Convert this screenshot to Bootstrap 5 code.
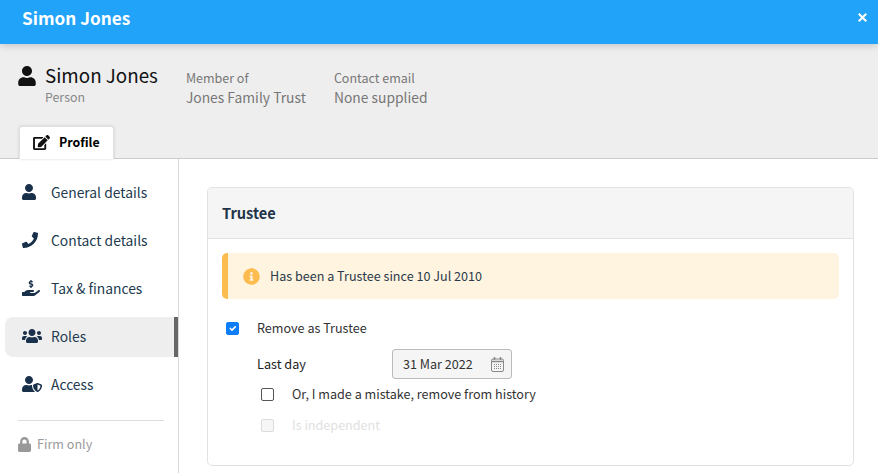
<!DOCTYPE html>
<html lang="en">
<head>
<meta charset="utf-8">
<title>Simon Jones</title>
<link href="https://cdn.jsdelivr.net/npm/bootstrap@5.3.0/dist/css/bootstrap.min.css" rel="stylesheet">
<style>
html,body{height:474px;overflow:hidden}
body{font-family:"Noto Sans CJK SC","Noto Sans",sans-serif;font-size:12.6px;line-height:20px;color:#212b36;background:#fff}
.top-bar{height:44px;background:#22a3fa;color:#fff;padding:0 11px 0 22px;position:relative;z-index:2;box-shadow:0 1px 8px rgba(0,0,0,.2)}
.top-title{font-size:17.2px;font-weight:700;line-height:35px}
.top-close{width:9px;height:9px;fill:#fff;display:block;margin-top:13px}
.band{height:115px;background:#eee;padding:20px 0 0 18px;border-bottom:1px solid #ccc;position:relative}
.band-ico{width:18px;height:20px;fill:#111;margin-top:2px}
.band-name{font-size:18.8px;line-height:24px;color:#111;margin-left:9px;margin-top:-1px;margin-bottom:1px}
.band-sub{font-size:12.4px;line-height:18px;color:#888;margin-left:27px}
.meta{margin-left:28px;margin-top:5px;color:#777}
.meta-k{font-size:12.5px;line-height:18px}
.meta-v{font-size:13.85px;line-height:20px}
.tab-wrap{position:absolute;left:19px;bottom:-1px;height:33px}
.tab-wrap .nav-link{height:33px;width:95px;padding:0 0 1px 13px;display:flex;align-items:center;gap:9px;background:#fff;color:#111;font-weight:700;font-size:12.4px;border:1px solid #ddd;border-bottom-color:#fff;border-radius:3px 3px 0 0;box-shadow:0 0 3px rgba(0,0,0,.15)}
.tab-ico{width:17px;height:15px;fill:#111}
.body-row{height:314px}
.side{width:179px;flex:none;border-right:1px solid #d9d9d9;padding:14px 0 0 5px}
.side-link{height:40px;margin-bottom:8px;padding:0 0 2px 16.5px;color:#223a50;font-size:13.85px;border-radius:8px 0 0 8px;text-decoration:none}
.side-link.is-on{background:#eee;border-right:4px solid #666}
.side-ico{height:16px;width:auto;fill:#18304a;display:block}
.side-ico-box{width:29.5px;flex:none}
.side-rule{margin:15px 14px 0 13px;border-color:#ddd;opacity:1}
.firm{margin:13px 0 0 13px;color:#999;font-size:12.6px;gap:6px}
.firm svg{width:13px;height:15px;fill:#999}
.main-pane{padding:28px 24px 0 28px;min-width:0}
.panel{height:279px;border:1px solid #e2e2e2;border-radius:5px}
.panel .card-header{height:51px;padding:0 14px;background:#f5f5f5;border-bottom:1px solid #e2e2e2;font-weight:700;font-size:14.6px;color:#1e3448;display:flex;align-items:center}
.panel .card-body{padding:14px 14px 0}
.note{height:46px;margin:0 0 19px;padding:0 0 0 15px;background:#fff4e0;border:0;border-left:6px solid #fcbc50;border-radius:5px;color:#2b3a49;font-size:12.6px;gap:10px}
.note svg{width:17px;height:17px;fill:#fcbc50}
.chk-row{height:20px;color:#333}
.chk-row .form-check-input{width:13px;height:13px;margin:0;border-color:#555;border-radius:2px;flex:none}
.chk-row .form-check-input:checked{background-color:#0d7dfa;border-color:#0d7dfa}
.chk-row .form-check-input:disabled{opacity:.5;background-color:#eee;border-color:#bbb}
.chk-row .form-check-label{opacity:1}
.ind-a{padding-left:4px;gap:18px}
.ind-b{padding-left:39px;gap:18px}
.gap-s{margin-top:5px}
.gap-m{margin-top:11px}
.muted-lbl{color:#c4c4c4}
.date-row{margin-top:11px;padding-left:35px;height:30px;color:#222}
.date-lbl{width:135px;font-size:12.7px}
.date-box{width:120px;height:30px;border:1px solid #bbb;border-radius:3px;background:#f5f5f5;padding:0 7px 0 10px;color:#333;font-size:12.6px}
.date-box svg{width:13px;height:15px;fill:none;stroke:#888}
</style>
</head>
<body>
<header class="top-bar d-flex justify-content-between align-items-start">
  <div class="top-title">Simon Jones</div>
  <svg class="top-close" viewBox="0 0 10 10"><path d="M1.6 0L5 3.4 8.4 0 10 1.6 6.6 5 10 8.4 8.4 10 5 6.6 1.6 10 0 8.4 3.4 5 0 1.6z"/></svg>
</header>
<section class="band">
  <div class="d-flex">
    <div>
      <div class="d-flex">
        <svg class="band-ico" viewBox="0 0 448 512"><path d="M224 256c70.7 0 128-57.3 128-128S294.7 0 224 0 96 57.3 96 128s57.3 128 128 128zm89.6 32h-16.7c-22.2 10.2-46.9 16-72.9 16s-50.6-5.8-72.9-16h-16.7C60.2 288 0 348.2 0 422.4V464c0 26.5 21.5 48 48 48h352c26.5 0 48-21.5 48-48v-41.6c0-74.2-60.2-134.4-134.4-134.4z"/></svg>
        <div class="band-name">Simon Jones</div>
      </div>
      <div class="band-sub">Person</div>
    </div>
    <div class="meta"><div class="meta-k">Member of</div><div class="meta-v">Jones Family Trust</div></div>
    <div class="meta"><div class="meta-k">Contact email</div><div class="meta-v">None supplied</div></div>
  </div>
  <ul class="nav nav-tabs border-0 tab-wrap">
    <li class="nav-item"><a class="nav-link active" href="#">
      <svg class="tab-ico" viewBox="0 0 576 512"><path d="M402.6 83.2l90.2 90.2c3.8 3.8 3.8 10 0 13.8L274.4 405.6l-92.8 10.3c-12.4 1.4-22.9-9.1-21.5-21.5l10.3-92.8L388.8 83.2c3.8-3.8 10-3.8 13.8 0zm162-22.9l-48.8-48.8c-15.2-15.2-39.9-15.2-55.2 0l-35.4 35.4c-3.8 3.8-3.8 10 0 13.8l90.2 90.2c3.8 3.8 10 3.8 13.8 0l35.4-35.4c15.2-15.3 15.2-40 0-55.2zM384 346.2V448H64V128h229.8c3.2 0 6.2-1.3 8.5-3.5l40-40c7.6-7.6 2.2-20.5-8.5-20.5H48C21.5 64 0 85.5 0 112v352c0 26.5 21.5 48 48 48h352c26.5 0 48-21.5 48-48V306.2c0-10.7-12.9-16-20.5-8.5l-40 40c-2.2 2.3-3.5 5.3-3.5 8.5z"/></svg>
      Profile</a></li>
  </ul>
</section>
<div class="d-flex body-row">
  <nav class="side">
    <a class="side-link d-flex align-items-center" href="#"><span class="side-ico-box"><svg class="side-ico" viewBox="0 0 448 512"><path d="M224 256c70.7 0 128-57.3 128-128S294.7 0 224 0 96 57.3 96 128s57.3 128 128 128zm89.6 32h-16.7c-22.2 10.2-46.9 16-72.9 16s-50.6-5.8-72.9-16h-16.7C60.2 288 0 348.2 0 422.4V464c0 26.5 21.5 48 48 48h352c26.5 0 48-21.5 48-48v-41.6c0-74.2-60.2-134.4-134.4-134.4z"/></svg></span>General details</a>
    <a class="side-link d-flex align-items-center" href="#"><span class="side-ico-box"><svg class="side-ico" viewBox="0 0 512 512"><path d="M493.4 24.6l-104-24c-11.3-2.6-22.9 3.3-27.5 13.9l-48 112c-4.2 9.8-1.4 21.3 6.9 28l60.6 49.6c-36 76.7-98.9 140.5-177.2 177.2l-49.6-60.6c-6.8-8.3-18.2-11.1-28-6.9l-112 48C3.9 366.5-2 378.1.6 389.4l24 104C27.1 504.2 36.7 512 48 512c256.1 0 464-207.5 464-464 0-11.2-7.7-20.9-18.6-23.4z"/></svg></span>Contact details</a>
    <a class="side-link d-flex align-items-center" href="#"><span class="side-ico-box"><svg class="side-ico" viewBox="0 0 576 512"><path d="M257.6 144.3l50 14.3c3.6 1 6.1 4.4 6.1 8.1 0 4.6-3.8 8.4-8.4 8.4h-32.8c-3.6 0-7.1-.8-10.3-2.2-4.8-2.2-10.4-1.7-14.1 2l-17.5 17.5c-5.3 5.3-4.7 14.3 1.5 18.4 9.5 6.3 20.3 10.1 31.8 11.5V240c0 8.8 7.2 16 16 16h16c8.8 0 16-7.2 16-16v-17.6c30.3-3.6 53.3-31 49.3-63-2.9-23-20.7-41.3-42.9-47.7l-50-14.3c-3.6-1-6.1-4.4-6.1-8.1 0-4.6 3.8-8.4 8.4-8.4h32.8c3.6 0 7.1.8 10.3 2.2 4.8 2.2 10.4 1.7 14.1-2l17.5-17.5c5.3-5.3 4.7-14.3-1.5-18.4-9.5-6.3-20.3-10.1-31.8-11.5V16c0-8.8-7.2-16-16-16h-16c-8.8 0-16 7.2-16 16v17.6c-30.3 3.6-53.3 31-49.3 63 2.9 23 20.7 41.3 42.9 47.7z"/><path d="M565.3 328.1c-11.8-10.7-30.2-10-42.6 0L430.3 402c-11.3 9.1-25.4 14-40 14H272c-8.8 0-16-7.2-16-16s7.2-16 16-16h78.3c15.9 0 30.7-10.9 33.3-26.6 3.3-20-12.1-37.4-31.6-37.4H192c-27 0-53.1 9.3-74.1 26.3L71.4 384H16c-8.8 0-16 7.2-16 16v96c0 8.8 7.2 16 16 16h356.7c14.5 0 28.6-4.9 40-14l151.2-121c15.2-12.2 16.4-35.1 2.4-47.9z"/></svg></span>Tax &amp; finances</a>
    <a class="side-link is-on d-flex align-items-center" href="#"><span class="side-ico-box"><svg class="side-ico" viewBox="0 0 640 512"><path d="M96 224c35.3 0 64-28.7 64-64s-28.7-64-64-64-64 28.7-64 64 28.7 64 64 64zm448 0c35.3 0 64-28.7 64-64s-28.7-64-64-64-64 28.7-64 64 28.7 64 64 64zm32 32h-64c-17.6 0-33.5 7.1-45.1 18.6 40.3 22.1 68.9 62 75.1 109.4h66c17.7 0 32-14.3 32-32v-32c0-35.3-28.7-64-64-64zm-256 0c61.9 0 112-50.1 112-112S381.9 32 320 32 208 82.1 208 144s50.1 112 112 112zm76.8 32h-8.3c-20.8 10-43.9 16-68.5 16s-47.6-6-68.5-16h-8.3C179.6 288 128 339.6 128 403.2V432c0 26.5 21.5 48 48 48h288c26.5 0 48-21.5 48-48v-28.8c0-63.6-51.6-115.2-115.2-115.2zm-223.7-13.4C161.5 263.1 145.6 256 128 256H64c-35.3 0-64 28.7-64 64v32c0 17.7 14.3 32 32 32h65.9c6.3-47.4 34.9-87.3 75.2-109.4z"/></svg></span>Roles</a>
    <a class="side-link d-flex align-items-center" href="#"><span class="side-ico-box"><svg class="side-ico" viewBox="0 0 640 512"><path d="M622.3 271.1l-115.2-45c-4.1-1.6-12.6-3.7-22.2 0l-115.2 45c-10.7 4.2-17.7 14-17.7 24.9 0 111.6 68.7 188.8 132.9 213.9 9.6 3.7 18 1.6 22.2 0C558.4 489.9 640 420.5 640 296c0-10.9-7-20.7-17.7-24.9zM496 462.4V273.3l95.5 37.3c-5.6 87.1-60.9 135.4-95.5 151.8zM224 256c70.7 0 128-57.3 128-128S294.7 0 224 0 96 57.3 96 128s57.3 128 128 128zm96 40c0-2.5.8-4.8 1.1-7.2-2.5-.1-4.9-.8-7.5-.8h-16.7c-22.2 10.2-46.9 16-72.9 16s-50.6-5.8-72.9-16h-16.7C60.2 288 0 348.2 0 422.4V464c0 26.5 21.5 48 48 48h352c6.8 0 13.3-1.5 19.2-4-54-42.9-99.2-116.7-99.2-212z"/></svg></span>Access</a>
    <hr class="side-rule">
    <div class="firm d-flex align-items-center"><svg viewBox="0 0 448 512"><path d="M400 224h-24v-72C376 68.2 307.8 0 224 0S72 68.2 72 152v72H48c-26.5 0-48 21.5-48 48v192c0 26.5 21.5 48 48 48h352c26.5 0 48-21.5 48-48V272c0-26.5-21.5-48-48-48zm-104 0H152v-72c0-39.7 32.3-72 72-72s72 32.3 72 72v72z"/></svg>Firm only</div>
  </nav>
  <main class="main-pane flex-grow-1">
    <div class="card panel">
      <div class="card-header">Trustee</div>
      <div class="card-body">
        <div class="alert note d-flex align-items-center">
          <svg viewBox="0 0 512 512"><path d="M256 8C119 8 8 119 8 256s111 248 248 248 248-111 248-248S393 8 256 8zm0 110c23.2 0 42 18.8 42 42s-18.8 42-42 42-42-18.8-42-42 18.8-42 42-42zm56 254c0 6.6-5.4 12-12 12h-88c-6.6 0-12-5.4-12-12v-24c0-6.6 5.4-12 12-12h12v-64h-12c-6.6 0-12-5.4-12-12v-24c0-6.6 5.4-12 12-12h64c6.6 0 12 5.4 12 12v100h12c6.6 0 12 5.4 12 12v24z"/></svg>
          Has been a Trustee since 10 Jul 2010
        </div>
        <div class="chk-row ind-a d-flex align-items-center"><input class="form-check-input" type="checkbox" id="c1" checked><label class="form-check-label" for="c1">Remove as Trustee</label></div>
        <div class="date-row d-flex align-items-center">
          <div class="date-lbl">Last day</div>
          <div class="date-box d-flex justify-content-between align-items-center">31 Mar 2022
            <svg viewBox="0 0 13 15"><rect x=".5" y="2" width="12" height="12.5" rx="1.5"/><path d="M3.5 0v3M9.5 0v3" stroke-width="1.5"/><path d="M.5 4.5h12" stroke-width="1.5"/><path d="M3 7.5h7M3 9.5h7M3 11.5h7" stroke-dasharray="1 1"/></svg>
          </div>
        </div>
        <div class="chk-row ind-b gap-s d-flex align-items-center"><input class="form-check-input" type="checkbox" id="c2"><label class="form-check-label" for="c2">Or, I made a mistake, remove from history</label></div>
        <div class="chk-row ind-b gap-m d-flex align-items-center"><input class="form-check-input" type="checkbox" id="c3" disabled><label class="form-check-label muted-lbl" for="c3">Is independent</label></div>
      </div>
    </div>
  </main>
</div>
<script src="https://cdn.jsdelivr.net/npm/bootstrap@5.3.0/dist/js/bootstrap.bundle.min.js"></script>
</body>
</html>
